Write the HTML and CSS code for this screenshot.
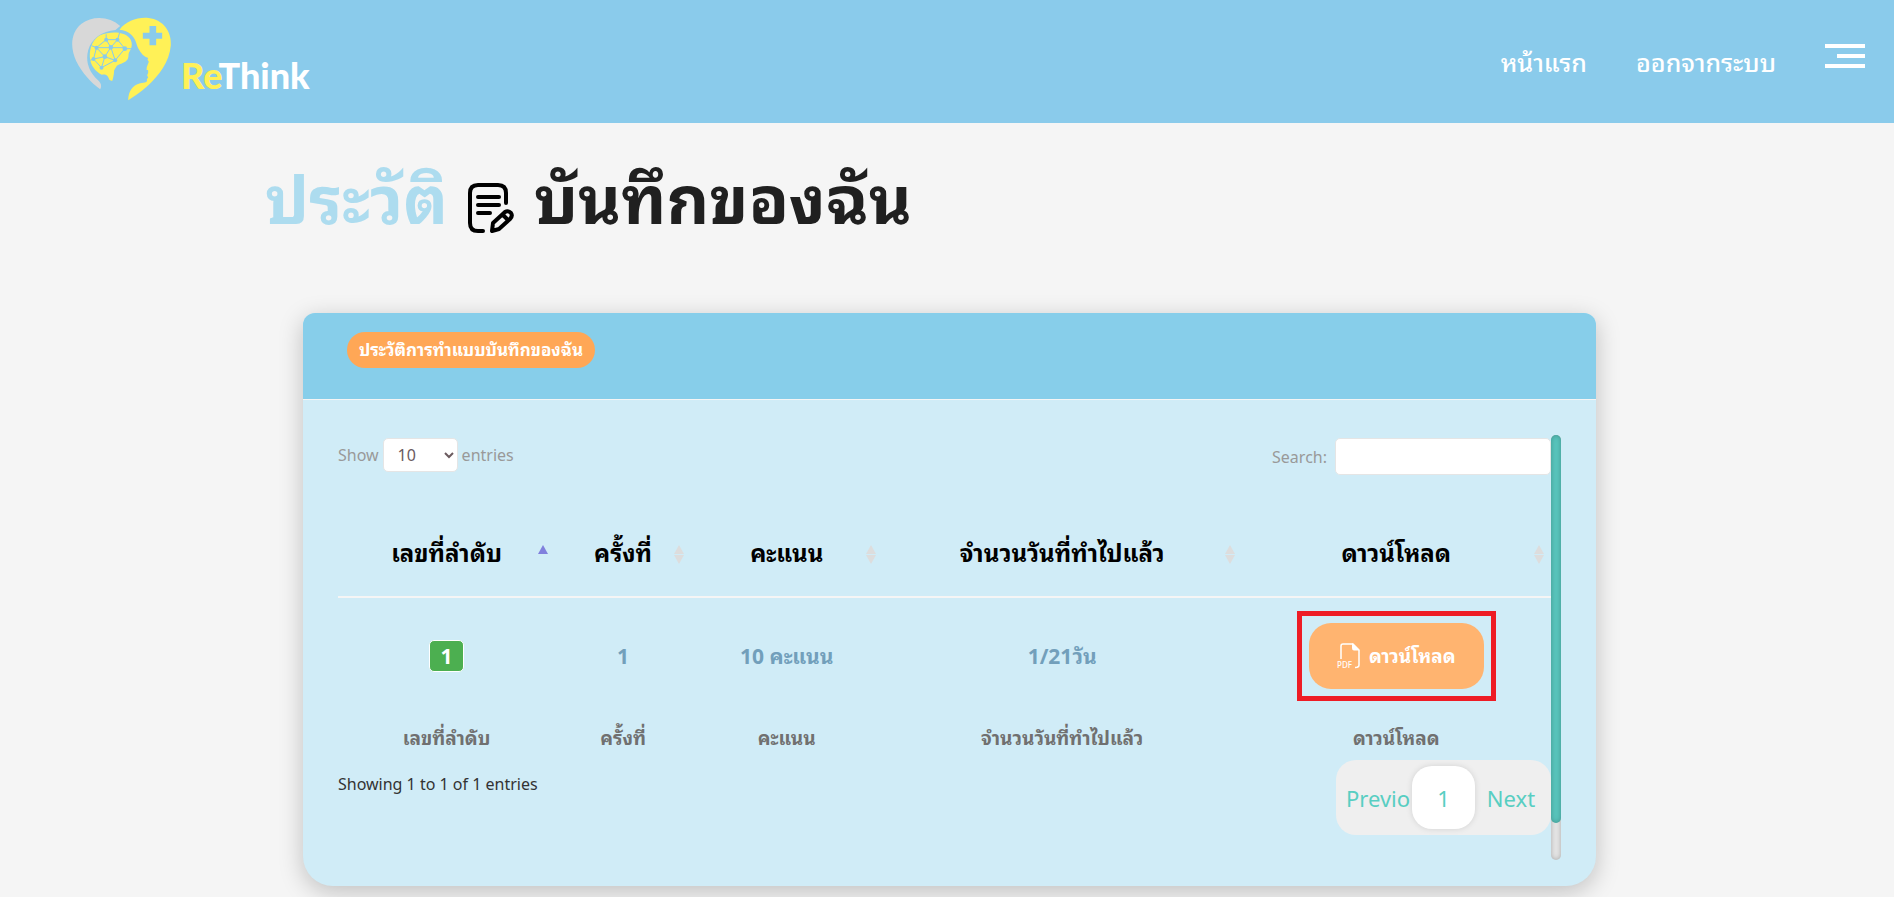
FILE: index.html
```html
<!DOCTYPE html>
<html lang="th">
<head>
<meta charset="utf-8">
<title>ReThink</title>
<link rel="stylesheet" href="styles.css">
</head>
<body>
<header class="topbar">
  <a class="brand" href="#">
    <svg class="brand-mark" viewBox="30 20 305 252" aria-hidden="true">
      <path fill="#d8d8d8" d="M180 47C150 18 98 14 64 40C30 68 30 112 48 152C66 188 92 216 120 237C126 226 122 216 112 208C84 182 76 150 84 120C94 84 126 62 166 59Z"/>
      <path fill="#fff157" d="M178 58C198 32 232 20 265 23C310 28 335 65 332 105C328 155 296 196 262 227C242 245 222 258 204 270C205 242 216 226 240 219C254 216 263 218 260 206L264 202L261 195L264 187L264 180L259 178L260 170L266 154L262 148L264 143C252 140 242 130 234 114C228 100 228 88 214 74C204 63 192 60 178 58Z"/>
      <path fill="#8acbeb" d="M268 47h20v20h18v18h-18v20h-20V85h-20V67h20z"/>
      <path fill="#fff157" d="M120 75C150 62 190 64 205 80C218 92 217 110 209 122C203 130 207 136 203 146C196 158 180 160 170 166L162 180C161 195 159 205 156 212L148 209C143 195 138 191 125 193C106 184 90 165 89 140C88 110 100 85 120 75Z"/>
      <g fill="none" stroke="#8acbeb" stroke-width="3"><path d="M138 72V88L109 112L100 146L124 172L165 150L194 115L172 88H138L152 111L134 139L109 112H194M134 139L100 146M134 139L124 172M134 139L165 150L152 111L172 88L178 68M194 115H216M109 112L94 106M100 146L90 150"/></g>
      <g fill="#8acbeb"><circle cx="138" cy="88" r="6"/><circle cx="172" cy="88" r="6"/><circle cx="109" cy="112" r="6"/><circle cx="152" cy="111" r="7"/><circle cx="194" cy="115" r="7"/><circle cx="134" cy="139" r="7"/><circle cx="100" cy="146" r="6"/><circle cx="165" cy="150" r="6"/><circle cx="124" cy="172" r="6"/></g>
    </svg>
    <span class="brand-name"><span class="brand-accent">Re</span>Think</span>
  </a>
  <nav class="nav">
    <a href="#">หน้าแรก</a>
    <a href="#">ออกจากระบบ</a>
    <button class="menu" type="button" aria-label="เมนู"><span></span><span class="short"></span><span></span></button>
  </nav>
</header>
<main>
  <h1 class="title">
    <span class="title-accent">ประวัติ</span>
    <svg class="title-icon" viewBox="0 0 46 50" aria-hidden="true" fill="none" stroke="#000" stroke-width="4" stroke-linecap="round" stroke-linejoin="round">
      <path d="M15 48H10Q2 48 2 40V10Q2 2 10 2H30Q38 2 38 10V20M10 14H31M10 22H31M10 30H22"/>
      <path d="M24 48L25 40L37 29Q40 27 43 30Q45 33 42 36L31 46ZM35 32L40 37"/>
    </svg>
    <span>บันทึกของฉัน</span>
  </h1>
  <section class="card">
    <div class="card-head"><h2 class="pill">ประวัติการทำแบบบันทึกของฉัน</h2></div>
    <div class="card-body">
      <div class="content">
        <div class="controls">
          <label class="length">Show <select><option>10</option></select> entries</label>
          <label class="search">Search: <input type="search"></label>
        </div>
        <table class="history">
          <colgroup><col class="c1"><col class="c2"><col class="c3"><col class="c4"><col class="c5"></colgroup>
          <thead>
            <tr>
              <th class="asc">เลขที่ลำดับ</th>
              <th>ครั้งที่</th>
              <th>คะแนน</th>
              <th>จำนวนวันที่ทำไปแล้ว</th>
              <th>ดาวน์โหลด</th>
            </tr>
          </thead>
          <tbody>
            <tr>
              <td><span class="badge">1</span></td>
              <td>1</td>
              <td>10 คะแนน</td>
              <td>1/21วัน</td>
              <td><div class="highlight"><button class="download" type="button">
                <svg class="pdf" viewBox="0 0 24 26" aria-hidden="true"><path fill="none" stroke="#fff" stroke-width="1.5" d="M4 16V3Q4 1 6 1H16L22 7V22Q22 24.500 18 24.500"/><path fill="#fff" d="M15 0L22.500 7.500H17Q15 7.500 15 5Z"/><text x="0" y="25" class="pdf-text">PDF</text></svg>
                ดาวน์โหลด</button></div></td>
            </tr>
          </tbody>
          <tfoot>
            <tr><th>เลขที่ลำดับ</th><th>ครั้งที่</th><th>คะแนน</th><th>จำนวนวันที่ทำไปแล้ว</th><th>ดาวน์โหลด</th></tr>
          </tfoot>
        </table>
        <div class="footer">
          <p class="info">Showing 1 to 1 of 1 entries</p>
          <div class="pager">
            <button type="button" class="prev">Previo</button>
            <button type="button" class="current">1</button>
            <button type="button" class="next">Next</button>
          </div>
        </div>
      </div>
      <div class="track"><div class="thumb"></div></div>
    </div>
  </section>
</main>
</body>
</html>
```

FILE: styles.css
```css
* { box-sizing: border-box; }
body {
  margin: 0;
  background: #f5f5f5;
  font-family: Tahoma, "Noto Sans", "Noto Sans Thai Looped", Loma, Garuda, Waree, "Noto Sans Thai", sans-serif;
  font-size: 16px;
  color: #333;
}
button, input, select { font: inherit; }
button { border: 0; cursor: pointer; }

.topbar {
  height: 123px;
  padding: 0 29px 0 70px;
  background: #8acbeb;
  display: flex;
  justify-content: space-between;
  align-items: flex-start;
}
.brand { display: flex; align-items: flex-start; padding-top: 17px; gap: 9px; text-decoration: none; }
.brand-mark { width: 102px; height: 84px; }
.brand-name {
  padding-top: 38px;
  font-family: Lato, sans-serif;
  font-weight: 900;
  font-size: 36px;
  line-height: 40px;
  color: #fff;
}
.brand-accent { color: #fff157; }
.nav { display: flex; align-items: flex-start; padding-top: 44px; gap: 49px; }
.nav a { color: #fff; font-size: 25px; line-height: 36px; font-weight: 500; text-decoration: none; }
.menu { display: flex; flex-direction: column; align-items: flex-end; gap: 6px; padding: 0; background: none; }
.menu span { width: 40px; height: 4px; background: #fff; }
.menu .short { width: 28px; }

main { padding-bottom: 11px; }
.title {
  display: flex;
  align-items: flex-end;
  gap: 20px;
  height: 90px;
  margin: 30px 0 70px 265px;
  font-size: 66px;
  line-height: 90px;
  font-weight: 700;
  color: #202020;
}
.title-accent { color: #addcef; }
.title-icon { width: 46px; height: 50px; margin-bottom: 10px; }

.card {
  margin: 0 298px 0 303px;
  border-radius: 12px 12px 30px 30px;
  background: #d0ecf7;
  box-shadow: 0 6px 24px rgba(0, 0, 0, .22);
  overflow: hidden;
}
.card-head { height: 87px; padding: 19px 44px; background: #87ceea; border-bottom: 1px solid #f5f5f5; }
.pill {
  display: inline-block;
  margin: 0;
  padding: 0 12px;
  border-radius: 18px;
  background: #ffa756;
  color: #fff;
  font-size: 17px;
  line-height: 36px;
  font-weight: 700;
}
.card-body { display: flex; padding: 35px 35px 26px; }
.content { flex: 1; min-width: 0; padding-bottom: 25px; }
.track { width: 10px; border-radius: 5px; background: #e4e4e4; box-shadow: inset 0 0 5px rgba(0, 0, 0, .25); }
.thumb { height: 388px; border-radius: 5px; background: #58c4bc; box-shadow: inset 0 0 5px rgba(0, 0, 0, .25); }

.controls { display: flex; justify-content: space-between; align-items: flex-start; padding-top: 3px; color: #999; }
.length { display: flex; align-items: center; gap: 4px; }
.length select { width: 75px; height: 34px; padding: 0 10px; border: 1px solid #e5e5e5; border-radius: 5px; background: #fff; color: #6b5b5f; }
.search { display: flex; align-items: center; gap: 8px; }
.search input { width: 216px; height: 37px; border: 1px solid #e5e5e5; border-radius: 5px; background: #fff; }

.history { width: 100%; margin-top: 36px; table-layout: fixed; border-collapse: collapse; text-align: center; }
.c1 { width: 17.9%; }
.c2 { width: 11.2%; }
.c3 { width: 15.8%; }
.c4 { width: 29.6%; }
.c5 { width: 25.5%; }
.history thead th { position: relative; height: 86px; padding: 0 0 2px; border-bottom: 2px solid #f5f5f5; color: #000; font-size: 24px; line-height: 32px; }
.history thead th::before, .history thead th::after {
  content: "";
  position: absolute;
  right: 7px;
  border: 5px solid transparent;
}
.history thead th::before { top: 29px; border-bottom: 9px solid #ddd; }
.history thead th::after { top: 44px; border-top: 9px solid #ddd; }
.history thead .asc::before { border-bottom-color: #8080dd; }
.history thead .asc::after { display: none; }
.history td { height: 116px; padding: 0; color: #729fbb; font-size: 21px; line-height: 30px; font-weight: 700; }
.badge { display: inline-block; width: 35px; border: 1px solid #fff; border-radius: 5px; background: #4caf50; color: #fff; }
.highlight { display: inline-block; padding: 7px; border: 5px solid #ee1c25; vertical-align: middle; }
.download { display: flex; align-items: center; justify-content: center; gap: 8px; width: 175px; height: 66px; padding: 0; border-radius: 22px; background: #ffb470; color: #fff; font-size: 19px; line-height: 24px; font-weight: 700; }
.pdf { width: 24px; height: 26px; }
.pdf-text { fill: #fff; font: 500 8px "Noto Sans", sans-serif; }
.history tfoot th { height: 47px; padding: 2px 0 0; color: #707070; font-size: 19px; line-height: 24px; }

.footer { display: flex; justify-content: space-between; align-items: flex-start; }
.info { margin: 11px 0 0; line-height: 26px; }
.pager { display: flex; align-items: center; width: 215px; height: 75px; padding: 0 10px; border-radius: 20px; background: #efefef; }
.pager button { padding: 0; background: none; color: #58cec2; font-size: 22px; line-height: 30px; }
.pager .prev { width: 66px; text-align: left; }
.pager button.current { width: 63px; height: 63px; border-radius: 20px; background: #fff; box-shadow: 0 0 6px rgba(0, 0, 0, .12); }
.pager .next { flex: 1; padding-left: 6px; }
```
